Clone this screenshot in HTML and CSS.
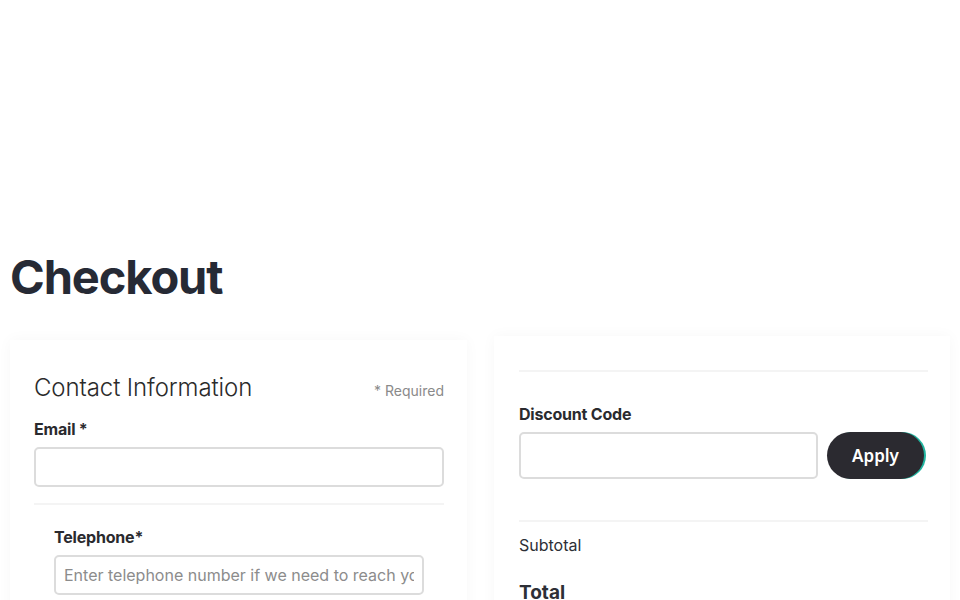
FILE: index.html
```html
<!DOCTYPE html>
<html lang="en">
<head>
  <meta charset="UTF-8" />
  <meta name="viewport" content="width=device-width, initial-scale=1" />
  <title>Checkout</title>
  <link rel="stylesheet" href="styles.css">
</head>
<body>
  <div class="top-space"></div>

  <h1 class="otsikko">Checkout</h1>

  <div class="checkout-grid">
    <!-- vasen: yhteystiedot -->
    <div class="kortti">
      <div class="kortti-otsikko">
        <h2>Contact Information</h2>
        <span class="pakollinen">* Required</span>
      </div>
      <label class="kentta-label" for="email">Email *</label>
      <input class="kentta" type="email" id="email" />

      <div class="erotin"></div>

      <div class="sisennys">
        <label class="kentta-label" for="puhelin">Telephone*</label>
        <input class="kentta" type="tel" id="puhelin" placeholder="Enter telephone number if we need to reach you regarding your order" />
      </div>
    </div>

    <!-- oikea: yhteenveto -->
    <div class="kortti kortti-oikea">
      <div class="erotin ylaerotin"></div>

      <label class="kentta-label" for="alekoodi">Discount Code</label>
      <div class="ale-rivi">
        <input class="kentta ale-kentta" type="text" id="alekoodi" />
        <button class="apply-nappi">Apply</button>
      </div>

      <div class="erotin"></div>

      <div class="summa-rivi">Subtotal</div>
      <div class="summa-rivi total">Total</div>
    </div>
  </div>
</body>
</html>
```

FILE: styles.css
```css
body {
  font-family: "Inter", "Noto Sans", sans-serif;
  margin: 0;
  padding: 0 10px;
  background-color: #fff;
  color: #2a2d36;
  overflow: hidden;
}

.top-space {
  height: 244px;
}

.otsikko {
  font-size: 47px;
  font-weight: 700;
  letter-spacing: -1.1px;
  margin: 0;
  line-height: 66px;
  color: #262a35;
}

.checkout-grid {
  display: grid;
  grid-template-columns: 457px 456px;
  gap: 27px;
  margin-top: 30px;
  align-items: start;
}

.kortti {
  background-color: #fff;
  box-shadow: 0 0 14px rgba(0, 0, 0, 0.035);
  padding: 33px 23px 30px 24px;
  min-height: 300px;
}

.kortti-oikea {
  margin-top: -4px;
  padding: 34px 22px 30px 25px;
}

.kortti-otsikko {
  display: flex;
  justify-content: space-between;
  align-items: baseline;
  margin-bottom: 17px;
}

.kortti-otsikko h2 {
  font-size: 24px;
  font-weight: 300;
  margin: 0;
  color: #2b2b2b;
  letter-spacing: -0.1px;
}

.pakollinen {
  font-size: 14px;
  color: #8a8a8a;
}

.kentta-label {
  display: block;
  font-size: 16px;
  font-weight: 700;
  color: #2a2a2e;
  margin-bottom: 8px;
  letter-spacing: -0.2px;
}

.kentta {
  display: block;
  box-sizing: border-box;
  width: 100%;
  height: 40px;
  border: 2px solid #dcdcdc;
  border-radius: 5px;
  padding: 0 8px;
  font-family: inherit;
  font-size: 16px;
  color: #333;
  background: #fff;
}

.kentta::placeholder {
  color: #8c8c8c;
}

.erotin {
  height: 2px;
  background-color: #f4f4f4;
  margin: 16px 0 22px 0;
}

.sisennys {
  padding: 0 20px;
}

.ale-rivi {
  display: flex;
  align-items: center;
  gap: 9px;
}

.ale-kentta {
  flex: 1;
  height: 47px;
}

.apply-nappi {
  width: 97px;
  height: 47px;
  border: none;
  border-radius: 24px;
  background-color: #2b2a30;
  color: #fff;
  font-family: "Noto Sans", sans-serif;
  font-size: 17px;
  font-weight: 600;
  cursor: pointer;
  box-shadow: 2px 0 0 #21b5a0;
  margin-right: 4px;
}

.kortti-oikea .erotin {
  margin: 41px 0 9px 0;
}

.kortti-oikea .ylaerotin {
  margin: 0 0 32px 0;
}

.summa-rivi {
  font-size: 16px;
  color: #2d2f36;
  padding: 4px 0;
}

.summa-rivi.total {
  font-size: 19px;
  font-weight: 700;
  margin-top: 18px;
}
```
